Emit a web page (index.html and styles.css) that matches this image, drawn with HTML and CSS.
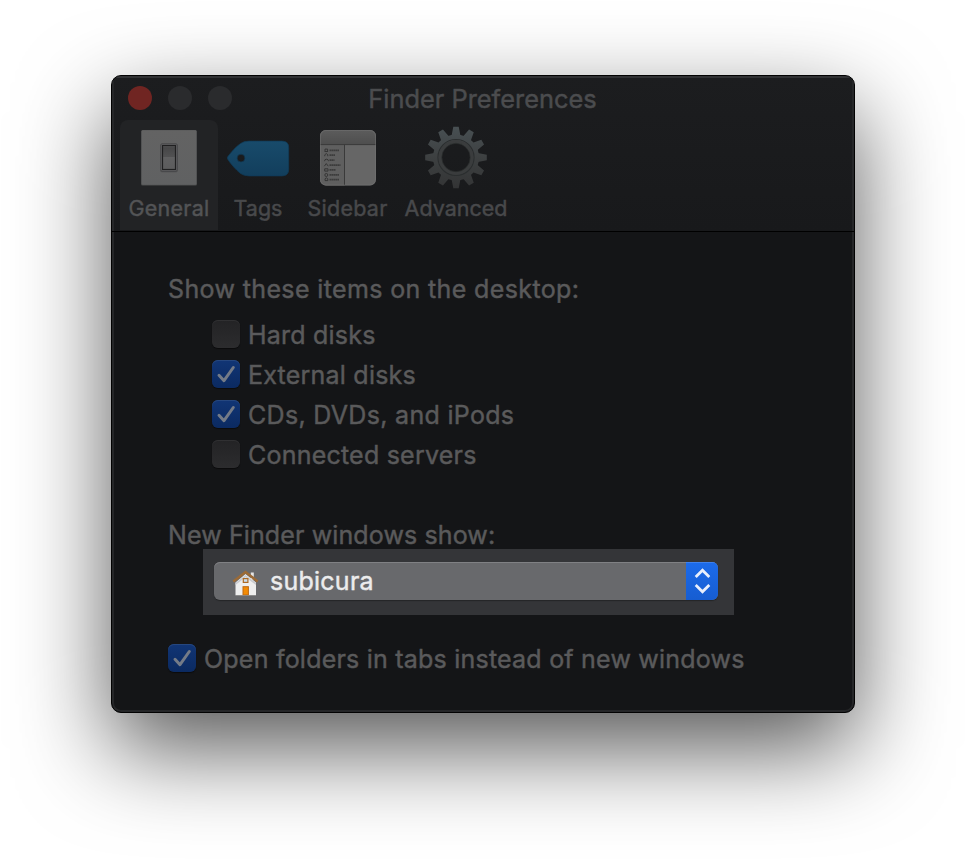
FILE: index.html
```
<!DOCTYPE html>
<html lang="en">
<head>
<meta charset="utf-8">
<title>Finder Preferences</title>
<link rel="stylesheet" href="styles.css">
</head>
<body>
<main class="window">
  <header class="chrome">
    <div class="titlebar">
      <div class="lights"><i class="light close"></i><i class="light"></i><i class="light"></i></div>
      <h1 class="title"><span>Finder Preferences</span></h1>
    </div>
    <nav class="tabs">
      <a class="tab general active">
        <svg class="icon" width="64" height="64" viewBox="0 0 64 64">
          <defs>
            <linearGradient id="plate" x2="0" y2="1"><stop stop-color="#636363"/><stop offset="1" stop-color="#606162"/></linearGradient>
            <linearGradient id="rocker" x2="0" y2="1"><stop stop-color="#555556"/><stop offset=".1" stop-color="#474748"/><stop offset=".46" stop-color="#515152"/><stop offset=".5" stop-color="#606061"/><stop offset="1" stop-color="#5c5c5d"/></linearGradient>
          </defs>
          <rect x="4" y="5" width="56" height="55.500" rx="1.500" fill="#4d4e4f"/>
          <rect x="4.800" y="5.300" width="54.400" height="54.400" rx="1" fill="url(#plate)"/>
          <rect x="23.300" y="18.500" width="17.400" height="28.800" rx="1.500" fill="#3c3c3d" opacity=".5"/>
          <rect x="24" y="19" width="16" height="27" rx="1" fill="#717172" stroke="#434344" stroke-width=".8"/>
          <rect x="25.500" y="20.500" width="13" height="24" fill="url(#rocker)" stroke="#202021" stroke-width="1.200"/>
        </svg>
        <span>General</span>
      </a>
      <a class="tab tags">
        <svg class="icon" width="64" height="64" viewBox="0 0 64 64">
          <defs><linearGradient id="tag" x2="0" y2="1"><stop stop-color="#184b6b"/><stop offset="1" stop-color="#123e5c"/></linearGradient></defs>
          <path fill="url(#tag)" stroke="#103b57" stroke-width=".7" fill-rule="evenodd" d="M1.900 31.500Q.9 33 1.900 34.500C5.400 39.500 9 44 14.500 48.500Q18 50.900 23 50.900H56Q62.700 50.900 62.700 44.500V22.500Q62.700 16.100 56 16.100H23Q18 16.100 14.500 18.500C9 22.500 5.400 27 1.900 31.500ZM15 29.200a3.900 3.900 0 1 1 0 7.800 3.900 3.900 0 0 1 0-7.800Z"/>
        </svg>
        <span>Tags</span>
      </a>
      <a class="tab sidebar">
        <svg class="icon" width="64" height="64" viewBox="0 0 64 64">
          <defs><linearGradient id="bar" x2="0" y2="1"><stop stop-color="#5c5c5c"/><stop offset="1" stop-color="#4e4e4e"/></linearGradient></defs>
          <g transform="translate(-.5 0)">
          <rect x="4.500" y="5" width="56" height="55.500" rx="6" fill="#666"/>
          <path d="M4.500 19.500V11a6 6 0 0 1 6-6h44a6 6 0 0 1 6 6v8.500Z" fill="url(#bar)"/>
          <path d="M4.500 20H29V60.500H10.500a6 6 0 0 1-6-6Z" fill="#5f5f5f"/>
          <path d="M4.500 19.600h56M29 19.600V60" stroke="#3a3a3a" fill="none"/>
          <rect x="5" y="5.500" width="55" height="54.500" rx="5.500" fill="none" stroke="#747474" stroke-width=".7" opacity=".7"/>
          <g fill="none" stroke="#313131" stroke-width=".9">
            <path d="M9.500 26v-1.900h2.600V26M9 26.500h3.600M9.300 31.200v-1.400l1.500-1.300 1.500 1.300v1.400M9 36.200q0-2 2-2t2 2M8.800 41.200l2-2.600 2 2.600M9.200 43.800h3.300v2.300H9.200ZM9.500 55.600v-1.800l1.300-1 1.500 1v1.800Z"/>
            <circle cx="10.800" cy="50" r="1.500"/>
          </g>
          <path d="M14 25.300h9.500M14 30.200h5.500M14 35.200h5M14 40.100h11M14 44.900h6M14 49.800h9.500M14 54.600h9.500" stroke="#3c3c3c" stroke-width="1.700" stroke-dasharray="1.800 .3"/>
          </g>
        </svg>
        <span>Sidebar</span>
      </a>
      <a class="tab advanced">
        <svg class="icon" width="64" height="64" viewBox="-32 -32.500 64 64">
          <defs>
            <linearGradient id="metal" gradientUnits="userSpaceOnUse" x1="0" y1="-31" x2="0" y2="31"><stop stop-color="#485053"/><stop offset=".5" stop-color="#3d4041"/><stop offset="1" stop-color="#333435"/></linearGradient>
          </defs>
          <path id="teeth" fill="url(#metal)" d=""/>
          <circle r="18.500" fill="none" stroke="url(#metal)" stroke-width="9"/>
          <circle r="18" fill="none" stroke="#2b2e2f" stroke-width="1.200"/>
          <circle r="16" fill="none" stroke="#3a3c3d" stroke-width="3"/>
          <circle r="14.200" fill="none" stroke="#27292a" stroke-width=".8"/>
        </svg>
        <span>Advanced</span>
      </a>
    </nav>
  </header>
  <section class="content">
    <h2 class="heading h-desktop"><span>Show these items on the desktop:</span></h2>
    <div class="checks">
      <label class="check"><i class="box"></i><span>Hard disks</span></label>
      <label class="check"><i class="box on"><svg width="28" height="28" viewBox="0 0 28 28"><path d="M7 15.300L12 20.700L21.300 7.500"/></svg></i><span>External disks</span></label>
      <label class="check"><i class="box on"><svg width="28" height="28" viewBox="0 0 28 28"><path d="M7 15.300L12 20.700L21.300 7.500"/></svg></i><span class="wide">CDs, DVDs, and iPods</span></label>
      <label class="check"><i class="box"></i><span>Connected servers</span></label>
    </div>
    <h2 class="heading h-show"><span>New Finder windows show:</span></h2>
    <div class="spotlight">
      <div class="select">
        <svg class="house" width="28" height="26" viewBox="0 0 28 26">
          <path d="M19.800 2.500h3v7h-3Z" fill="#e5e5e5"/>
          <path d="M4.500 12.500L14.500 4L25 12.500V25.300H4.500Z" fill="#eee"/>
          <path d="M4.500 13L14.500 5L25 13V15L14.500 7.300L4.500 15Z" fill="#c9cbd0"/>
          <path d="M2.300 11.500L14.500 2L26.700 11.500" fill="none" stroke="#9b6a36" stroke-width="2.500"/>
          <rect x="12.300" y="8.600" width="4.600" height="3.800" fill="#c9def0" stroke="#ad6a24" stroke-width="1.200"/>
          <rect x="12" y="16.700" width="5.400" height="8.300" fill="#f28b05" stroke="#bd6812" stroke-width="1"/>
          <path d="M4.500 25.500h20.500" stroke="#8b8b8b" stroke-width=".7"/>
        </svg>
        <span class="value">subicura</span>
        <span class="stepper"><svg width="32" height="38" viewBox="0 0 32 38"><path d="M9.700 15L16.500 8.300L23.300 15M9.700 23L16.500 29.700L23.300 23"/></svg></span>
      </div>
    </div>
    <label class="check open"><i class="box on"><svg width="28" height="28" viewBox="0 0 28 28"><path d="M7 15.300L12 20.700L21.300 7.500"/></svg></i><span>Open folders in tabs instead of new windows</span></label>
  </section>
</main>
<script src="gear.js"></script>
</body>
</html>
```
FILE: styles.css
```
* { box-sizing: border-box; }
body {
  margin: 0;
  height: 860px;
  padding: 75px 0 0 111px;
  overflow: hidden;
  background: #fff;
  font-family: Inter, "Liberation Sans", sans-serif;
  -webkit-text-stroke: .45px currentColor;
}
h1, h2 { margin: 0; font-weight: 400; }
svg { display: block; }
.window {
  width: 744px;
  height: 638px;
  border: 1px solid #020202;
  border-radius: 10px;
  overflow: hidden;
  background: #141517;
  box-shadow: inset 0 0 0 2px #252628, 0 36px 92px rgba(0, 0, 0, .66);
}
.chrome {
  height: 156px;
  background: linear-gradient(#1c1d1f, #18191b);
  border-bottom: 1px solid #000;
  box-shadow: inset 2px 0 #252628, inset -2px 0 #252628, inset 0 2px #313234;
}
.titlebar { display: grid; grid-template-columns: 200px 1fr 200px; height: 44px; align-items: center; }
.lights { display: flex; gap: 16px; padding-left: 16px; }
.light { width: 24px; height: 24px; border-radius: 50%; background: #2a2b2d; }
.light.close { background: #702522; }
.title { display: flex; justify-content: center; padding: 1px 1px 0 0; font-size: 25.4px; line-height: 32px; color: #4b4c4e; white-space: nowrap; }
.tabs { display: flex; height: 110px; padding-left: 8px; }
.tab { display: flex; flex-direction: column; align-items: center; padding-top: 5px; font-size: 21.5px; line-height: 28px; color: #48494b; white-space: nowrap; }
.tab > span { margin-top: 5px; }
.general { width: 98px; letter-spacing: .25px; }
.tags { width: 80px; }
.sidebar { width: 99px; letter-spacing: .25px; }
.advanced { width: 118px; }
.active { background: #222325; border-radius: 8px 8px 0 0; color: #535456; }
.content { display: flex; flex-direction: column; align-items: flex-start; padding: 37px 0 0 56px; color: #5a5a5b; font-size: 25px; }
.heading { font-size: 25px; line-height: 40px; white-space: nowrap; }
.h-desktop { letter-spacing: .37px; }
.h-show { letter-spacing: .12px; }
.checks { margin: 5px 0 0 44px; }
.check { display: flex; align-items: center; gap: 8px; height: 40px; letter-spacing: .22px; white-space: nowrap; }
.check span { padding-top: 2px; }
.check .wide { letter-spacing: .31px; }
.box { width: 28px; height: 28px; border-radius: 6px; background: linear-gradient(#232325, #2c2c2e); box-shadow: inset 0 1px #303032, 0 1px 1px #0b0b0c; }
.box.on { background: linear-gradient(#113575, #0b2a61); box-shadow: inset 0 1px #26477f, 0 1px 1px #0b0b0c; }
.box path { fill: none; stroke: #747b87; stroke-width: 3; stroke-linecap: round; stroke-linejoin: round; }
.h-show { margin-top: 41px; }
.spotlight { width: 531px; height: 66px; margin: -6px 0 0 35px; padding: 13px 16px 15px 11px; background: #343538; }
.select { display: flex; align-items: center; height: 38px; border-radius: 6px; overflow: hidden; background: #68696c; box-shadow: 0 1px 1px #242527, inset 0 1px #808184; }
.house { margin: 4px 0 0 17px; }
.value { margin-left: 11px; font-size: 25px; letter-spacing: .25px; color: #ececed; }
.stepper { margin-left: auto; width: 32px; height: 38px; background: linear-gradient(#1c6bea, #165dd1); box-shadow: inset 0 1px #3f82ee; }
.stepper path { fill: none; stroke: #e8effc; stroke-width: 2.8; stroke-linecap: butt; }
.open { margin-top: 23px; }
```
FILE: gear.js
```
// Twelve tapered teeth around the gear ring.
const outline = [[-4.7, -20.5], [-2.7, -30.8], [2.7, -30.8], [4.7, -20.5]];
let d = '';
for (let i = 0; i < 12; i++) {
  const a = i * Math.PI / 6;
  d += 'M' + outline.map(([x, y]) =>
    (x * Math.cos(a) - y * Math.sin(a)).toFixed(2) + ' ' +
    (x * Math.sin(a) + y * Math.cos(a)).toFixed(2)).join('L') + 'Z';
}
document.getElementById('teeth').setAttribute('d', d);
```
